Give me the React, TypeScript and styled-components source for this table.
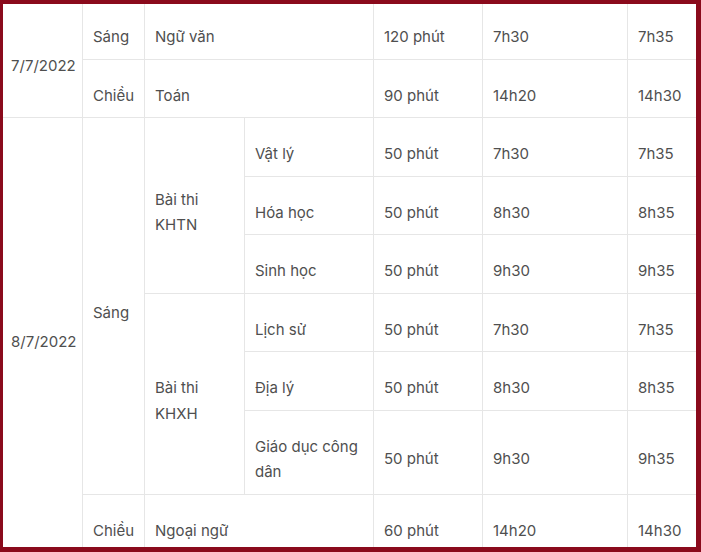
import React from 'react'
import styled, { createGlobalStyle } from 'styled-components'

const GlobalStyle = createGlobalStyle`
  html, body {
    margin: 0;
    padding: 0;
    background: #ffffff;
  }
`

const Frame = styled.div`
  box-sizing: border-box;
  width: 701px;
  height: 552px;
  overflow: hidden;
  background: #ffffff;
  border-style: solid;
  border-color: #8a0a1c;
  border-width: 4px 5px 5px 3px;
`

const Table = styled.table`
  table-layout: fixed;
  width: 701px;
  margin: -4px 0 0 -3px;
  border-collapse: collapse;
  font-family: Inter, 'Noto Sans', sans-serif;
  font-size: 15px;
  line-height: 1.7;
  color: #4f4f4f;
`

const Cell = styled.td`
  border: 1px solid #e6e6e6;
  padding: 23px 10px 9px;
  vertical-align: middle;
  text-align: left;
`

const widths = [82, 62, 100, 129, 109, 145, 74]

type Row = { cells: { text: React.ReactNode; rowSpan?: number; colSpan?: number }[] }

const rows: Row[] = [
  {
    cells: [
      { text: '7/7/2022', rowSpan: 2 },
      { text: 'Sáng' },
      { text: 'Ngữ văn', colSpan: 2 },
      { text: '120 phút' },
      { text: '7h30' },
      { text: '7h35' },
    ],
  },
  {
    cells: [
      { text: 'Chiều' },
      { text: 'Toán', colSpan: 2 },
      { text: '90 phút' },
      { text: '14h20' },
      { text: '14h30' },
    ],
  },
  {
    cells: [
      { text: '8/7/2022', rowSpan: 7 },
      { text: 'Sáng', rowSpan: 6 },
      { text: 'Bài thi KHTN', rowSpan: 3 },
      { text: 'Vật lý' },
      { text: '50 phút' },
      { text: '7h30' },
      { text: '7h35' },
    ],
  },
  { cells: [{ text: 'Hóa học' }, { text: '50 phút' }, { text: '8h30' }, { text: '8h35' }] },
  { cells: [{ text: 'Sinh học' }, { text: '50 phút' }, { text: '9h30' }, { text: '9h35' }] },
  {
    cells: [
      { text: 'Bài thi KHXH', rowSpan: 3 },
      { text: 'Lịch sử' },
      { text: '50 phút' },
      { text: '7h30' },
      { text: '7h35' },
    ],
  },
  { cells: [{ text: 'Địa lý' }, { text: '50 phút' }, { text: '8h30' }, { text: '8h35' }] },
  { cells: [{ text: 'Giáo dục công dân' }, { text: '50 phút' }, { text: '9h30' }, { text: '9h35' }] },
  {
    cells: [
      { text: 'Chiều' },
      { text: 'Ngoại ngữ', colSpan: 2 },
      { text: '60 phút' },
      { text: '14h20' },
      { text: '14h30' },
    ],
  },
]

const App = () => (
  <>
    <GlobalStyle />
    <Frame>
      <Table>
        <colgroup>
          {widths.map((w, i) => (
            <col key={i} style={{ width: w }} />
          ))}
        </colgroup>
        <tbody>
          {rows.map((row, i) => (
            <tr key={i}>
              {row.cells.map((c, j) => (
                <Cell key={j} rowSpan={c.rowSpan} colSpan={c.colSpan}>
                  {c.text}
                </Cell>
              ))}
            </tr>
          ))}
        </tbody>
      </Table>
    </Frame>
  </>
)

export default App
